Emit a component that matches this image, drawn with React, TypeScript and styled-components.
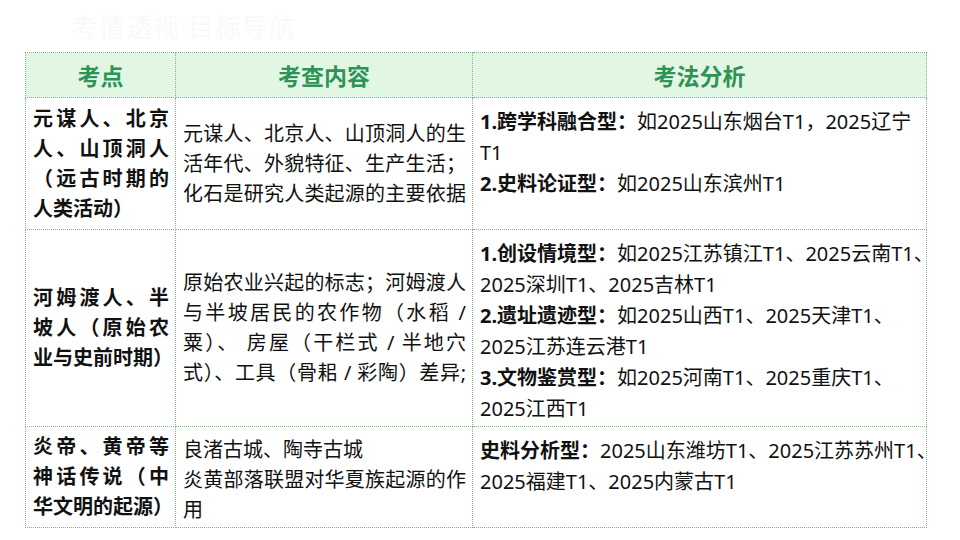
import styled, { createGlobalStyle } from 'styled-components';

const GlobalStyle = createGlobalStyle`
  html, body {
    margin: 0;
    padding: 0;
    background: #ffffff;
  }
  body {
    font-family: "Noto Sans", "Noto Sans CJK SC", sans-serif;
    color: #111111;
  }
`;

const Page = styled.div`
  width: 960px;
  height: 540px;
  padding: 8px 36px 0 25px;
  box-sizing: border-box;
  overflow: hidden;
`;

const Title = styled.div`
  height: 44px;
  padding-left: 47px;
  font-size: 26px;
  line-height: 38px;
  font-weight: 400;
  color: #f9f9f9;
  letter-spacing: 1px;
`;

const Table = styled.table`
  width: 898px;
  border-collapse: collapse;
  table-layout: fixed;
  td,
  th {
    border: 1px dotted #86b586;
  }
`;

const HeadRow = styled.tr`
  height: 45px;
  background: #e2f6e4;
`;

const HeadCell = styled.th<{ $w: number }>`
  width: ${(p) => p.$w}px;
  padding: 0;
  font-size: 23px;
  font-weight: 700;
  color: #2f9356;
  text-align: center;
  vertical-align: middle;
`;

const Row = styled.tr<{ $h: number }>`
  height: ${(p) => p.$h}px;
`;

const Cell = styled.td<{ $top?: boolean; $bold?: boolean; $lh?: number }>`
  padding: ${(p) => (p.$top ? '8px 6px 0 7px' : '0 6px 0 7px')};
  vertical-align: ${(p) => (p.$top ? 'top' : 'middle')};
  font-size: 20px;
  line-height: ${(p) => p.$lh ?? 30}px;
  font-weight: ${(p) => (p.$bold ? 700 : 400)};
  white-space: nowrap;
`;

const Line = styled.div<{ $spread?: boolean }>`
  text-align: justify;
  text-align-last: ${(p) => (p.$spread ? 'justify' : 'left')};
`;

const Label = styled.span`
  font-weight: 700;
`;

type Block = { lines: string[]; spreadLast?: boolean };

const Lines = ({ lines, spreadLast }: Block) => (
  <>
    {lines.map((l, i) => (
      <Line key={i} $spread={i < lines.length - 1 || spreadLast}>
        {l}
      </Line>
    ))}
  </>
);

const rows = [
  {
    h: 132,
    point: ['元谋人、北京', '人、山顶洞人', '（远古时期的', '人类活动）'],
    content: {
      lines: ['元谋人、北京人、山顶洞人的生', '活年代、外貌特征、生产生活；', '化石是研究人类起源的主要依据'],
      spreadLast: true,
    },
    contentTop: false,
    analysis: [
      { label: '1.跨学科融合型：', lines: ['如2025山东烟台T1，2025辽宁', 'T1'] },
      { label: '2.史料论证型：', lines: ['如2025山东滨州T1'] },
    ],
  },
  {
    h: 197,
    point: ['河姆渡人、半', '坡人（原始农', '业与史前时期）'],
    content: {
      lines: ['原始农业兴起的标志；河姆渡人', '与半坡居民的农作物（水稻 /', '粟）、 房屋（干栏式 / 半地穴', '式）、工具（骨耜 / 彩陶）差异;'],
      spreadLast: true,
    },
    contentTop: false,
    analysis: [
      { label: '1.创设情境型：', lines: ['如2025江苏镇江T1、2025云南T1、', '2025深圳T1、2025吉林T1'] },
      { label: '2.遗址遗迹型：', lines: ['如2025山西T1、2025天津T1、', '2025江苏连云港T1'] },
      { label: '3.文物鉴赏型：', lines: ['如2025河南T1、2025重庆T1、', '2025江西T1'] },
    ],
  },
  {
    h: 101,
    point: ['炎帝、黄帝等', '神话传说（中', '华文明的起源）'],
    content: {
      lines: ['良渚古城、陶寺古城', '炎黄部落联盟对华夏族起源的作', '用'],
      spreadLast: false,
    },
    contentTop: true,
    analysis: [{ label: '史料分析型：', lines: ['2025山东潍坊T1、2025江苏苏州T1、', '2025福建T1、2025内蒙古T1'] }],
  },
];

const App = () => (
  <>
    <GlobalStyle />
    <Page>
      <Title>考情透视·目标导航</Title>
      <Table>
        <thead>
          <HeadRow>
            <HeadCell $w={149}>考点</HeadCell>
            <HeadCell $w={296}>考查内容</HeadCell>
            <HeadCell $w={453}>考法分析</HeadCell>
          </HeadRow>
        </thead>
        <tbody>
          {rows.map((r, i) => (
            <Row key={i} $h={r.h}>
              <Cell $bold>
                <Lines lines={r.point} />
              </Cell>
              <Cell $top={r.contentTop}>
                {i === 2 ? (
                  <>
                    <Line>{r.content.lines[0]}</Line>
                    <Line $spread>{r.content.lines[1]}</Line>
                    <Line>{r.content.lines[2]}</Line>
                  </>
                ) : (
                  <Lines {...r.content} />
                )}
              </Cell>
              <Cell $top $lh={31}>
                {r.analysis.map((a, j) => (
                  <div key={j}>
                    {a.lines.map((l, k) => (
                      <div key={k}>
                        {k === 0 && <Label>{a.label}</Label>}
                        {l}
                      </div>
                    ))}
                  </div>
                ))}
              </Cell>
            </Row>
          ))}
        </tbody>
      </Table>
    </Page>
  </>
);

export default App;
